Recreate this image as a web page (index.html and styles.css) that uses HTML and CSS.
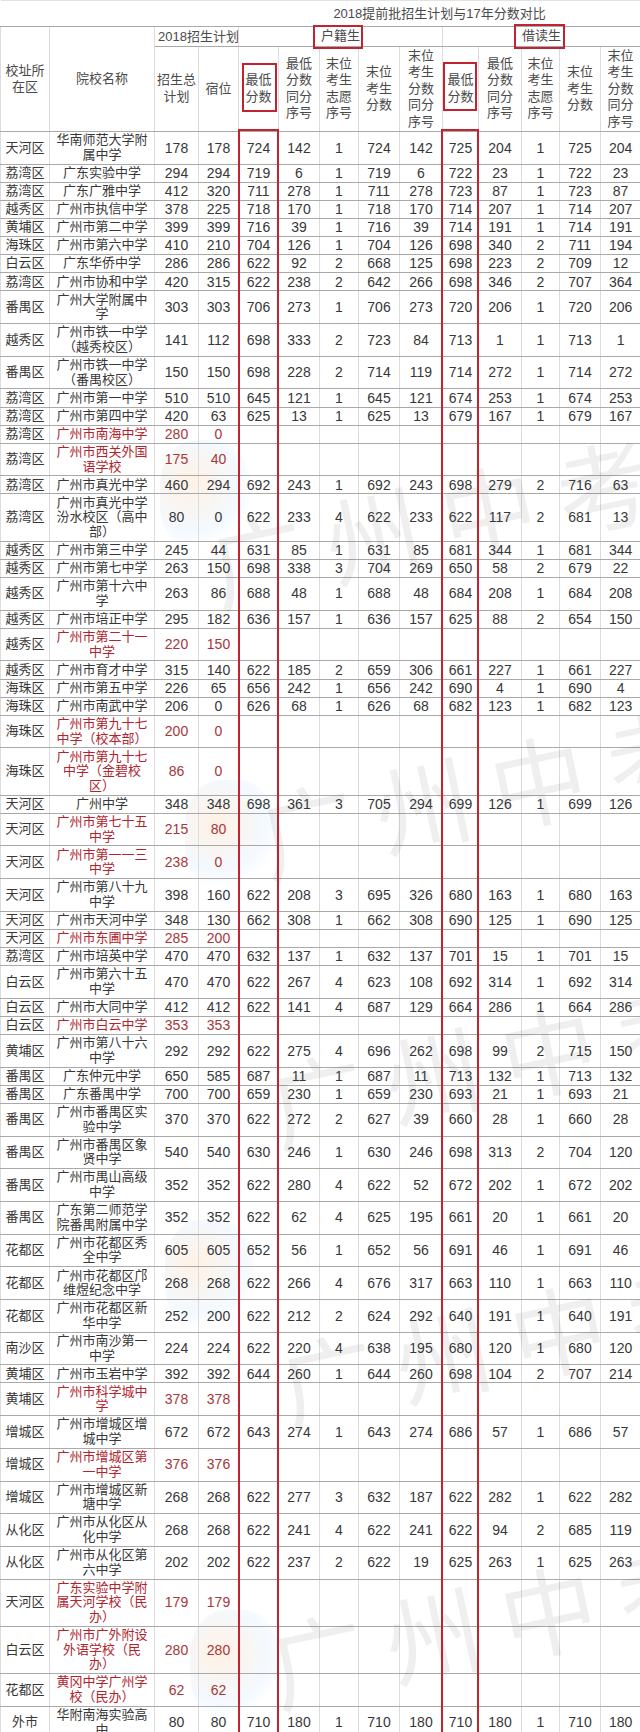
FILE: index.html
```html
<!DOCTYPE html>
<html lang="zh-CN">
<head>
<meta charset="utf-8">
<title>2018提前批招生计划与17年分数对比</title>
<link rel="stylesheet" href="styles.css">
</head>
<body>
<div class="sheet">
<div class="blob bl1"></div>
<div class="blob bl2"></div>
<div class="blob bl3"></div>
<div class="blob bl4"></div>
<table class="grid">
<colgroup>
<col class="w49"><col class="w105"><col class="w44"><col class="w40"><col class="w40"><col class="w41"><col class="w39"><col class="w41"><col class="w43"><col class="w36"><col class="w43"><col class="w38"><col class="w41"><col class="w40">
</colgroup>
<thead>
<tr class="ttl"><th colspan="4"></th><th colspan="10">2018提前批招生计划与17年分数对比</th></tr>
<tr class="grp"><th rowspan="2" class="hd">校址所在区</th><th rowspan="2" class="hd">院校名称</th><th colspan="2" class="plan">2018招生计划</th><th colspan="5" class="hd">户籍生</th><th colspan="5" class="hd">借读生</th></tr>
<tr class="sub"><th class="hd tight">招生总计划</th><th class="hd">宿位</th><th class="hd">最低分数</th><th class="hd">最低分数同分序号</th><th class="hd">末位考生志愿序号</th><th class="hd">末位考生分数</th><th class="hd">末位考生分数同分序号</th><th class="hd">最低分数</th><th class="hd">最低分数同分序号</th><th class="hd">末位考生志愿序号</th><th class="hd">末位考生分数</th><th class="hd">末位考生分数同分序号</th></tr>
</thead>
<tbody>
<tr><td class="d">天河区</td><td class="nm">华南师范大学附属中学</td><td>178</td><td>178</td><td>724</td><td>142</td><td>1</td><td>724</td><td>142</td><td>725</td><td>204</td><td>1</td><td>725</td><td>204</td></tr>
<tr><td class="d">荔湾区</td><td class="nm">广东实验中学</td><td>294</td><td>294</td><td>719</td><td>6</td><td>1</td><td>719</td><td>6</td><td>722</td><td>23</td><td>1</td><td>722</td><td>23</td></tr>
<tr><td class="d">荔湾区</td><td class="nm">广东广雅中学</td><td>412</td><td>320</td><td>711</td><td>278</td><td>1</td><td>711</td><td>278</td><td>723</td><td>87</td><td>1</td><td>723</td><td>87</td></tr>
<tr><td class="d">越秀区</td><td class="nm">广州市执信中学</td><td>378</td><td>225</td><td>718</td><td>170</td><td>1</td><td>718</td><td>170</td><td>714</td><td>207</td><td>1</td><td>714</td><td>207</td></tr>
<tr><td class="d">黄埔区</td><td class="nm">广州市第二中学</td><td>399</td><td>399</td><td>716</td><td>39</td><td>1</td><td>716</td><td>39</td><td>714</td><td>191</td><td>1</td><td>714</td><td>191</td></tr>
<tr><td class="d">海珠区</td><td class="nm">广州市第六中学</td><td>410</td><td>210</td><td>704</td><td>126</td><td>1</td><td>704</td><td>126</td><td>698</td><td>340</td><td>2</td><td>711</td><td>194</td></tr>
<tr><td class="d">白云区</td><td class="nm">广东华侨中学</td><td>286</td><td>286</td><td>622</td><td>92</td><td>2</td><td>668</td><td>125</td><td>698</td><td>223</td><td>2</td><td>709</td><td>12</td></tr>
<tr><td class="d">荔湾区</td><td class="nm">广州市协和中学</td><td>420</td><td>315</td><td>622</td><td>238</td><td>2</td><td>642</td><td>266</td><td>698</td><td>346</td><td>2</td><td>707</td><td>364</td></tr>
<tr><td class="d">番禺区</td><td class="nm">广州大学附属中学</td><td>303</td><td>303</td><td>706</td><td>273</td><td>1</td><td>706</td><td>273</td><td>720</td><td>206</td><td>1</td><td>720</td><td>206</td></tr>
<tr><td class="d">越秀区</td><td class="nm">广州市铁一中学（越秀校区）</td><td>141</td><td>112</td><td>698</td><td>333</td><td>2</td><td>723</td><td>84</td><td>713</td><td>1</td><td>1</td><td>713</td><td>1</td></tr>
<tr><td class="d">番禺区</td><td class="nm">广州市铁一中学（番禺校区）</td><td>150</td><td>150</td><td>698</td><td>228</td><td>2</td><td>714</td><td>119</td><td>714</td><td>272</td><td>1</td><td>714</td><td>272</td></tr>
<tr><td class="d">荔湾区</td><td class="nm">广州市第一中学</td><td>510</td><td>510</td><td>645</td><td>121</td><td>1</td><td>645</td><td>121</td><td>674</td><td>253</td><td>1</td><td>674</td><td>253</td></tr>
<tr><td class="d">荔湾区</td><td class="nm">广州市第四中学</td><td>420</td><td>63</td><td>625</td><td>13</td><td>1</td><td>625</td><td>13</td><td>679</td><td>167</td><td>1</td><td>679</td><td>167</td></tr>
<tr class="red"><td class="d">荔湾区</td><td class="nm">广州市南海中学</td><td>280</td><td>0</td><td></td><td></td><td></td><td></td><td></td><td></td><td></td><td></td><td></td><td></td></tr>
<tr class="red"><td class="d">荔湾区</td><td class="nm">广州市西关外国语学校</td><td>175</td><td>40</td><td></td><td></td><td></td><td></td><td></td><td></td><td></td><td></td><td></td><td></td></tr>
<tr><td class="d">荔湾区</td><td class="nm">广州市真光中学</td><td>460</td><td>294</td><td>692</td><td>243</td><td>1</td><td>692</td><td>243</td><td>698</td><td>279</td><td>2</td><td>716</td><td>63</td></tr>
<tr><td class="d">荔湾区</td><td class="nm">广州市真光中学汾水校区（高中部）</td><td>80</td><td>0</td><td>622</td><td>233</td><td>4</td><td>622</td><td>233</td><td>622</td><td>117</td><td>2</td><td>681</td><td>13</td></tr>
<tr><td class="d">越秀区</td><td class="nm">广州市第三中学</td><td>245</td><td>44</td><td>631</td><td>85</td><td>1</td><td>631</td><td>85</td><td>681</td><td>344</td><td>1</td><td>681</td><td>344</td></tr>
<tr><td class="d">越秀区</td><td class="nm">广州市第七中学</td><td>263</td><td>150</td><td>698</td><td>338</td><td>3</td><td>704</td><td>269</td><td>650</td><td>58</td><td>2</td><td>679</td><td>22</td></tr>
<tr><td class="d">越秀区</td><td class="nm">广州市第十六中学</td><td>263</td><td>86</td><td>688</td><td>48</td><td>1</td><td>688</td><td>48</td><td>684</td><td>208</td><td>1</td><td>684</td><td>208</td></tr>
<tr><td class="d">越秀区</td><td class="nm">广州市培正中学</td><td>295</td><td>182</td><td>636</td><td>157</td><td>1</td><td>636</td><td>157</td><td>625</td><td>88</td><td>2</td><td>654</td><td>150</td></tr>
<tr class="red"><td class="d">越秀区</td><td class="nm">广州市第二十一中学</td><td>220</td><td>150</td><td></td><td></td><td></td><td></td><td></td><td></td><td></td><td></td><td></td><td></td></tr>
<tr><td class="d">越秀区</td><td class="nm">广州市育才中学</td><td>315</td><td>140</td><td>622</td><td>185</td><td>2</td><td>659</td><td>306</td><td>661</td><td>227</td><td>1</td><td>661</td><td>227</td></tr>
<tr><td class="d">海珠区</td><td class="nm">广州市第五中学</td><td>226</td><td>65</td><td>656</td><td>242</td><td>1</td><td>656</td><td>242</td><td>690</td><td>4</td><td>1</td><td>690</td><td>4</td></tr>
<tr><td class="d">海珠区</td><td class="nm">广州市南武中学</td><td>206</td><td>0</td><td>626</td><td>68</td><td>1</td><td>626</td><td>68</td><td>682</td><td>123</td><td>1</td><td>682</td><td>123</td></tr>
<tr class="red"><td class="d">海珠区</td><td class="nm">广州市第九十七中学（校本部）</td><td>200</td><td>0</td><td></td><td></td><td></td><td></td><td></td><td></td><td></td><td></td><td></td><td></td></tr>
<tr class="red"><td class="d">海珠区</td><td class="nm">广州市第九十七中学（金碧校区）</td><td>86</td><td>0</td><td></td><td></td><td></td><td></td><td></td><td></td><td></td><td></td><td></td><td></td></tr>
<tr><td class="d">天河区</td><td class="nm">广州中学</td><td>348</td><td>348</td><td>698</td><td>361</td><td>3</td><td>705</td><td>294</td><td>699</td><td>126</td><td>1</td><td>699</td><td>126</td></tr>
<tr class="red"><td class="d">天河区</td><td class="nm">广州市第七十五中学</td><td>215</td><td>80</td><td></td><td></td><td></td><td></td><td></td><td></td><td></td><td></td><td></td><td></td></tr>
<tr class="red"><td class="d">天河区</td><td class="nm">广州市第一一三中学</td><td>238</td><td>0</td><td></td><td></td><td></td><td></td><td></td><td></td><td></td><td></td><td></td><td></td></tr>
<tr><td class="d">天河区</td><td class="nm">广州市第八十九中学</td><td>398</td><td>160</td><td>622</td><td>208</td><td>3</td><td>695</td><td>326</td><td>680</td><td>163</td><td>1</td><td>680</td><td>163</td></tr>
<tr><td class="d">天河区</td><td class="nm">广州市天河中学</td><td>348</td><td>130</td><td>662</td><td>308</td><td>1</td><td>662</td><td>308</td><td>690</td><td>125</td><td>1</td><td>690</td><td>125</td></tr>
<tr class="red"><td class="d">天河区</td><td class="nm">广州市东圃中学</td><td>285</td><td>200</td><td></td><td></td><td></td><td></td><td></td><td></td><td></td><td></td><td></td><td></td></tr>
<tr><td class="d">荔湾区</td><td class="nm">广州市培英中学</td><td>470</td><td>470</td><td>632</td><td>137</td><td>1</td><td>632</td><td>137</td><td>701</td><td>15</td><td>1</td><td>701</td><td>15</td></tr>
<tr><td class="d">白云区</td><td class="nm">广州市第六十五中学</td><td>470</td><td>470</td><td>622</td><td>267</td><td>4</td><td>623</td><td>108</td><td>692</td><td>314</td><td>1</td><td>692</td><td>314</td></tr>
<tr><td class="d">白云区</td><td class="nm">广州市大同中学</td><td>412</td><td>412</td><td>622</td><td>141</td><td>4</td><td>687</td><td>129</td><td>664</td><td>286</td><td>1</td><td>664</td><td>286</td></tr>
<tr class="red"><td class="d">白云区</td><td class="nm">广州市白云中学</td><td>353</td><td>353</td><td></td><td></td><td></td><td></td><td></td><td></td><td></td><td></td><td></td><td></td></tr>
<tr><td class="d">黄埔区</td><td class="nm">广州市第八十六中学</td><td>292</td><td>292</td><td>622</td><td>275</td><td>4</td><td>696</td><td>262</td><td>698</td><td>99</td><td>2</td><td>715</td><td>150</td></tr>
<tr><td class="d">番禺区</td><td class="nm">广东仲元中学</td><td>650</td><td>585</td><td>687</td><td>11</td><td>1</td><td>687</td><td>11</td><td>713</td><td>132</td><td>1</td><td>713</td><td>132</td></tr>
<tr><td class="d">番禺区</td><td class="nm">广东番禺中学</td><td>700</td><td>700</td><td>659</td><td>230</td><td>1</td><td>659</td><td>230</td><td>693</td><td>21</td><td>1</td><td>693</td><td>21</td></tr>
<tr><td class="d">番禺区</td><td class="nm">广州市番禺区实验中学</td><td>370</td><td>370</td><td>622</td><td>272</td><td>2</td><td>627</td><td>39</td><td>660</td><td>28</td><td>1</td><td>660</td><td>28</td></tr>
<tr><td class="d">番禺区</td><td class="nm">广州市番禺区象贤中学</td><td>540</td><td>540</td><td>630</td><td>246</td><td>1</td><td>630</td><td>246</td><td>698</td><td>313</td><td>2</td><td>704</td><td>120</td></tr>
<tr><td class="d">番禺区</td><td class="nm">广州市禺山高级中学</td><td>352</td><td>352</td><td>622</td><td>280</td><td>4</td><td>622</td><td>52</td><td>672</td><td>202</td><td>1</td><td>672</td><td>202</td></tr>
<tr><td class="d">番禺区</td><td class="nm">广东第二师范学院番禺附属中学</td><td>352</td><td>352</td><td>622</td><td>62</td><td>4</td><td>625</td><td>195</td><td>661</td><td>20</td><td>1</td><td>661</td><td>20</td></tr>
<tr><td class="d">花都区</td><td class="nm">广州市花都区秀全中学</td><td>605</td><td>605</td><td>652</td><td>56</td><td>1</td><td>652</td><td>56</td><td>691</td><td>46</td><td>1</td><td>691</td><td>46</td></tr>
<tr><td class="d">花都区</td><td class="nm">广州市花都区邝维煜纪念中学</td><td>268</td><td>268</td><td>622</td><td>266</td><td>4</td><td>676</td><td>317</td><td>663</td><td>110</td><td>1</td><td>663</td><td>110</td></tr>
<tr><td class="d">花都区</td><td class="nm">广州市花都区新华中学</td><td>252</td><td>200</td><td>622</td><td>212</td><td>2</td><td>624</td><td>292</td><td>640</td><td>191</td><td>1</td><td>640</td><td>191</td></tr>
<tr><td class="d">南沙区</td><td class="nm">广州市南沙第一中学</td><td>224</td><td>224</td><td>622</td><td>220</td><td>4</td><td>638</td><td>195</td><td>680</td><td>120</td><td>1</td><td>680</td><td>120</td></tr>
<tr><td class="d">黄埔区</td><td class="nm">广州市玉岩中学</td><td>392</td><td>392</td><td>644</td><td>260</td><td>1</td><td>644</td><td>260</td><td>698</td><td>104</td><td>2</td><td>707</td><td>214</td></tr>
<tr class="red"><td class="d">黄埔区</td><td class="nm">广州市科学城中学</td><td>378</td><td>378</td><td></td><td></td><td></td><td></td><td></td><td></td><td></td><td></td><td></td><td></td></tr>
<tr><td class="d">增城区</td><td class="nm">广州市增城区增城中学</td><td>672</td><td>672</td><td>643</td><td>274</td><td>1</td><td>643</td><td>274</td><td>686</td><td>57</td><td>1</td><td>686</td><td>57</td></tr>
<tr class="red"><td class="d">增城区</td><td class="nm">广州市增城区第一中学</td><td>376</td><td>376</td><td></td><td></td><td></td><td></td><td></td><td></td><td></td><td></td><td></td><td></td></tr>
<tr><td class="d">增城区</td><td class="nm">广州市增城区新塘中学</td><td>268</td><td>268</td><td>622</td><td>277</td><td>3</td><td>632</td><td>187</td><td>622</td><td>282</td><td>1</td><td>622</td><td>282</td></tr>
<tr><td class="d">从化区</td><td class="nm">广州市从化区从化中学</td><td>268</td><td>268</td><td>622</td><td>241</td><td>4</td><td>622</td><td>241</td><td>622</td><td>94</td><td>2</td><td>685</td><td>119</td></tr>
<tr><td class="d">从化区</td><td class="nm">广州市从化区第六中学</td><td>202</td><td>202</td><td>622</td><td>237</td><td>2</td><td>622</td><td>19</td><td>625</td><td>263</td><td>1</td><td>625</td><td>263</td></tr>
<tr class="red"><td class="d">天河区</td><td class="nm">广东实验中学附属天河学校（民办）</td><td>179</td><td>179</td><td></td><td></td><td></td><td></td><td></td><td></td><td></td><td></td><td></td><td></td></tr>
<tr class="red"><td class="d">白云区</td><td class="nm">广州市广外附设外语学校（民办）</td><td>280</td><td>280</td><td></td><td></td><td></td><td></td><td></td><td></td><td></td><td></td><td></td><td></td></tr>
<tr class="red"><td class="d">花都区</td><td class="nm">黄冈中学广州学校（民办）</td><td>62</td><td>62</td><td></td><td></td><td></td><td></td><td></td><td></td><td></td><td></td><td></td><td></td></tr>
<tr><td class="d">外市</td><td class="nm">华附南海实验高中</td><td>80</td><td>80</td><td>710</td><td>180</td><td>1</td><td>710</td><td>180</td><td>710</td><td>180</td><td>1</td><td>710</td><td>180</td></tr>
</tbody>
</table>

<div class="wm wm1">广州中考</div>
<div class="wm wm2">广州中考</div>
<div class="wm wm3">广州中考</div>
<div class="wm wm4">广州中考</div>
<div class="wm wm5">广州中考</div>

<div class="box b-hj"></div>
<div class="box b-jd"></div>
<div class="box b-h1"></div>
<div class="box b-h2"></div>
<div class="box b-c1"></div>
<div class="box b-c2"></div>
</div>
</body>
</html>
```
FILE: styles.css
```css
* { box-sizing: border-box; }

body {
  margin: 0;
  background: #ffffff;
}

.sheet {
  position: relative;
  width: 640px;
  overflow: hidden;
}

.grid {
  position: relative;
  width: 640px;
  border-collapse: collapse;
  table-layout: fixed;
  font-family: "Liberation Sans", "Noto Sans CJK SC", sans-serif;
  color: #373737;
}

.w49 { width: 49px; }
.w105 { width: 105px; }
.w44 { width: 44px; }
.w43 { width: 43px; }
.w41 { width: 41px; }
.w40 { width: 40px; }
.w39 { width: 39px; }
.w38 { width: 38px; }
.w36 { width: 36px; }

.grid td,
.grid th {
  border-left: 1px solid #dcdcdc;
  border-right: 1px solid #dcdcdc;
  border-top: 1px solid #a9a9a9;
  border-bottom: 1px solid #a9a9a9;
  padding: 1.25px 2px;
  text-align: center;
  vertical-align: middle;
  font-weight: normal;
  font-size: 14px;
  line-height: 14.6px;
}

/* header */
.ttl th {
  height: 26px;
  border-left: none;
  border-right: none;
  border-top: 1px solid #e2e2e2;
  font-size: 13px;
  color: #4a4a4a;
  padding-top: 3px;
  white-space: nowrap;
}

.grp th { height: 18px; }
.sub th { height: 85px; }

.grid th.hd {
  font-size: 13px;
  line-height: 16.5px;
  color: #4a4a4a;
  padding: 1px 2px;
}

.grid th.tight { padding: 1px 1px; }

.grid .grp th.plan {
  font-size: 13px;
  line-height: 15px;
  text-align: left;
  white-space: nowrap;
  overflow: hidden;
  padding: 1px 0 0 3px;
  color: #4a4a4a;
}

/* body */
.grid td.d,
.grid td.nm {
  font-size: 13px;
}

.grid td.nm {
  padding-left: 4px;
  padding-right: 4px;
}

.red td.nm { color: #b0242e; }
.red td:nth-child(3),
.red td:nth-child(4) { color: #a8363a; }

/* red annotation boxes drawn over the sheet */
.box {
  position: absolute;
  border: 2px solid #c12331;
  pointer-events: none;
}

.b-hj { left: 313px; top: 25px; width: 50px; height: 24px; }
.b-jd { left: 514px; top: 24px; width: 51px; height: 25px; }
.b-h1 { left: 242px; top: 63px; width: 35px; height: 49px; }
.b-h2 { left: 443px; top: 62px; width: 34px; height: 49px; }
.b-c1 { left: 238px; top: 129px; width: 41px; height: 1700px; }
.b-c2 { left: 441px; top: 129px; width: 38px; height: 1700px; }

/* faint watermark */
.wm {
  position: absolute;
  font-family: "Noto Sans CJK SC", sans-serif;
  font-size: 96px;
  line-height: 1;
  letter-spacing: 22px;
  color: rgba(80, 80, 80, 0.09);
  white-space: nowrap;
  transform: rotate(-12deg);
  transform-origin: left top;
  pointer-events: none;
}

.wm1 { left: 200px; top: 520px; }
.wm2 { left: 250px; top: 790px; }
.wm3 { left: 260px; top: 1060px; }
.wm4 { left: 270px; top: 1340px; }
.wm5 { left: 260px; top: 1620px; }

/* faint pastel logo marks under the sheet */
.blob {
  position: absolute;
  width: 90px;
  height: 110px;
  border-radius: 40%;
  background: radial-gradient(circle at 35% 40%, rgba(255, 170, 90, 0.16), rgba(140, 200, 255, 0.10) 55%, rgba(255, 255, 255, 0) 72%);
  pointer-events: none;
}

.bl1 { left: 160px; top: 440px; }
.bl2 { left: 185px; top: 780px; }
.bl3 { left: 165px; top: 1220px; }
.bl4 { left: 190px; top: 1610px; }
```
